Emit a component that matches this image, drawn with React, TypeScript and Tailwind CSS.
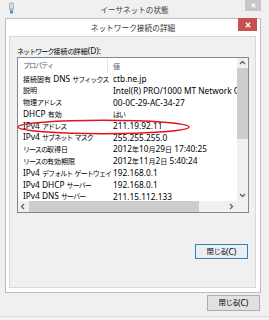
import type { ReactNode } from 'react'

const RUNS = /([\u3040-\u30ff]+|[\u3000-\u303f\u4e00-\u9fff\uff00-\uffef]+)/
const KANA = /^[\u3040-\u30ff]+$/

// Meiryo UI draws kanji smaller than its Latin glyphs and packs kana tighter, so runs are sized apart
function J({ t }: { t: string }) {
  return (
    <>
      {t.split(RUNS).map((p, i) => {
        if (i % 2 === 0) return <span key={i}>{p}</span>
        return (
          <span key={i} className={KANA.test(p) ? 'text-[7px] tracking-[-0.13em]' : 'text-[7px]'}>
            {p}
          </span>
        )
      })}
    </>
  )
}

const rows: [string, string][] = [
  ['接続固有 DNS サフィックス', 'ctb.ne.jp'],
  ['説明', 'Intel(R) PRO/1000 MT Network Co'],
  ['物理アドレス', '00-0C-29-AC-34-27'],
  ['DHCP 有効', 'はい'],
  ['IPv4 アドレス', '211.19.92.11'],
  ['IPv4 サブネット マスク', '255.255.255.0'],
  ['リースの取得日', '2012年10月29日 17:40:25'],
  ['リースの有効期限', '2012年11月2日 5:40:24'],
  ['IPv4 デフォルト ゲートウェイ', '192.168.0.1'],
  ['IPv4 DHCP サーバー', '192.168.0.1'],
  ['IPv4 DNS サーバー', '211.15.112.133'],
]

function Chevron({ dir }: { dir: 'up' | 'down' | 'left' | 'right' }) {
  const pts = {
    up: '1,4 3.5,1.5 6,4',
    down: '1,2 3.5,4.5 6,2',
    left: '4,1 1.5,3.5 4,6',
    right: '2,1 4.5,3.5 2,6',
  }[dir]
  return (
    <svg width="7" height="7" viewBox="0 0 7 7">
      <polyline points={pts} fill="none" stroke="#606060" strokeWidth="1.3" />
    </svg>
  )
}

function CloseX({ size = 6 }: { size?: number }) {
  return (
    <svg width={size} height={size} viewBox="0 0 6 6">
      <path d="M0.8 0.8 L5.2 5.2 M5.2 0.8 L0.8 5.2" stroke="#fff" strokeWidth="1.4" />
    </svg>
  )
}

function Button({ children, focused }: { children: ReactNode; focused?: boolean }) {
  return (
    <div
      className={`w-[53px] flex items-center justify-center border text-[8.3px] leading-[12px] ${
        focused ? 'h-[15px] border-[#3c7fb1] bg-[#e9eef3]' : 'h-[16px] border-[#adadad] bg-[#e1e1e1]'
      }`}
    >
      {children}
    </div>
  )
}

export default function App() {
  return (
    <div className="w-[269px] h-[320px] bg-[#f0f0f0] overflow-hidden font-['Noto_Sans','Noto_Sans_CJK_JP',sans-serif] text-black flex flex-col">
      {/* outer title bar */}
      <div className="h-[18px] shrink-0 grid grid-cols-[1fr_auto_1fr] items-start">
        <div className="pl-[8px] pt-[2px]">
          <svg width="7" height="12" viewBox="0 0 7 12">
            <rect x="1" y="0.5" width="5" height="8" rx="1.5" fill="#a9b4be" />
            <rect x="2" y="1.5" width="3" height="5" rx="1" fill="#d6dde3" />
            <rect x="2" y="8.5" width="3" height="3" rx="0.5" fill="#3d8fe0" />
          </svg>
        </div>
        <div className="pt-[3px] text-[7.6px] leading-[14px] text-[#404040]">イーサネットの状態</div>
        <div className="flex justify-end pr-[8px]">
          <div className="w-[16px] h-[11px] bg-[#c7c7c7] flex items-center justify-center">
            <CloseX size={5} />
          </div>
        </div>
      </div>

      {/* inner dialog */}
      <div className="ml-[5px] w-[256px] h-[275px] shrink-0 border border-[#bdbdbd] bg-white flex flex-col">
        <div className="h-[17px] shrink-0 grid grid-cols-[1fr_auto_1fr] items-start">
          <div />
          <div className="pt-[2px] text-[7.7px] leading-[14px] text-[#333]">ネットワーク接続の詳細</div>
          <div className="flex justify-end pr-[3px]">
            <div className="-mt-[1px] w-[19px] h-[13px] bg-[#c75050] flex items-center justify-center">
              <CloseX size={6} />
            </div>
          </div>
        </div>

        <div className="ml-[3px] mr-[4px] mb-[4px] flex-1 border border-[#d9d9d9] bg-[#f0f0f0] flex flex-col px-[7px] pt-[8px]">
          <div className="h-[11px] leading-[11px] text-[8.3px] whitespace-nowrap">
            <J t="ネットワーク接続の詳細(D):" />
          </div>

          <div className="relative mt-[1px] w-[232px] h-[156px] shrink-0 border border-[#828790] bg-white flex flex-col">
            <div className="flex h-[143px]">
              <div className="w-[219px] overflow-hidden flex flex-col">
                <div className="h-[15px] shrink-0 flex items-center text-[8.3px] leading-[15px] text-[#4c607a]">
                  <div className="w-[90px] h-full flex items-center pl-[5px] border-r border-[#e5e5e5]">
                    <J t="プロパティ" />
                  </div>
                  <div className="pl-[5px]">
                    <J t="値" />
                  </div>
                </div>
                {rows.map(([k, v]) => (
                  <div key={k} className="h-[11.8px] shrink-0 flex items-center text-[8.3px] leading-[11.8px] whitespace-nowrap">
                    <div className="w-[90px] shrink-0 pl-[5px]">
                      <J t={k} />
                    </div>
                    <div className="pl-[5px]">
                      <J t={v} />
                    </div>
                  </div>
                ))}
              </div>
              <div className="w-[11px] bg-[#f0f0f0] flex flex-col">
                <div className="h-[10px] flex items-center justify-center">
                  <Chevron dir="up" />
                </div>
                <div className="h-[71px] bg-[#cdcdcd]" />
                <div className="flex-1" />
                <div className="h-[11px] flex items-center justify-center">
                  <Chevron dir="down" />
                </div>
              </div>
            </div>
            <div className="flex h-[11px]">
              <div className="w-[219px] bg-[#f0f0f0] flex items-center">
                <div className="w-[10px] flex justify-center">
                  <Chevron dir="left" />
                </div>
                <div className="ml-[1px] w-[170px] h-full bg-[#cdcdcd]" />
                <div className="flex-1" />
                <div className="w-[11px] flex justify-center">
                  <Chevron dir="right" />
                </div>
              </div>
              <div className="w-[11px] bg-[#f0f0f0]" />
            </div>

            <svg className="absolute left-[-1px] top-[61px]" width="173" height="16" viewBox="0 0 173 16">
              <ellipse cx="86.5" cy="8" rx="85.5" ry="6.8" fill="none" stroke="#e5121c" strokeWidth="1.4" />
            </svg>
          </div>

          <div className="flex justify-end mt-[31px]">
            <Button focused>
              <J t="閉じる(C)" />
            </Button>
          </div>
        </div>
      </div>

      {/* outer footer */}
      <div className="flex justify-end pr-[9px] pt-[2px]">
        <Button>
          <J t="閉じる(C)" />
        </Button>
      </div>
      <div className="mt-[5px] border-t border-[#dcdcdc]" />
    </div>
  )
}
